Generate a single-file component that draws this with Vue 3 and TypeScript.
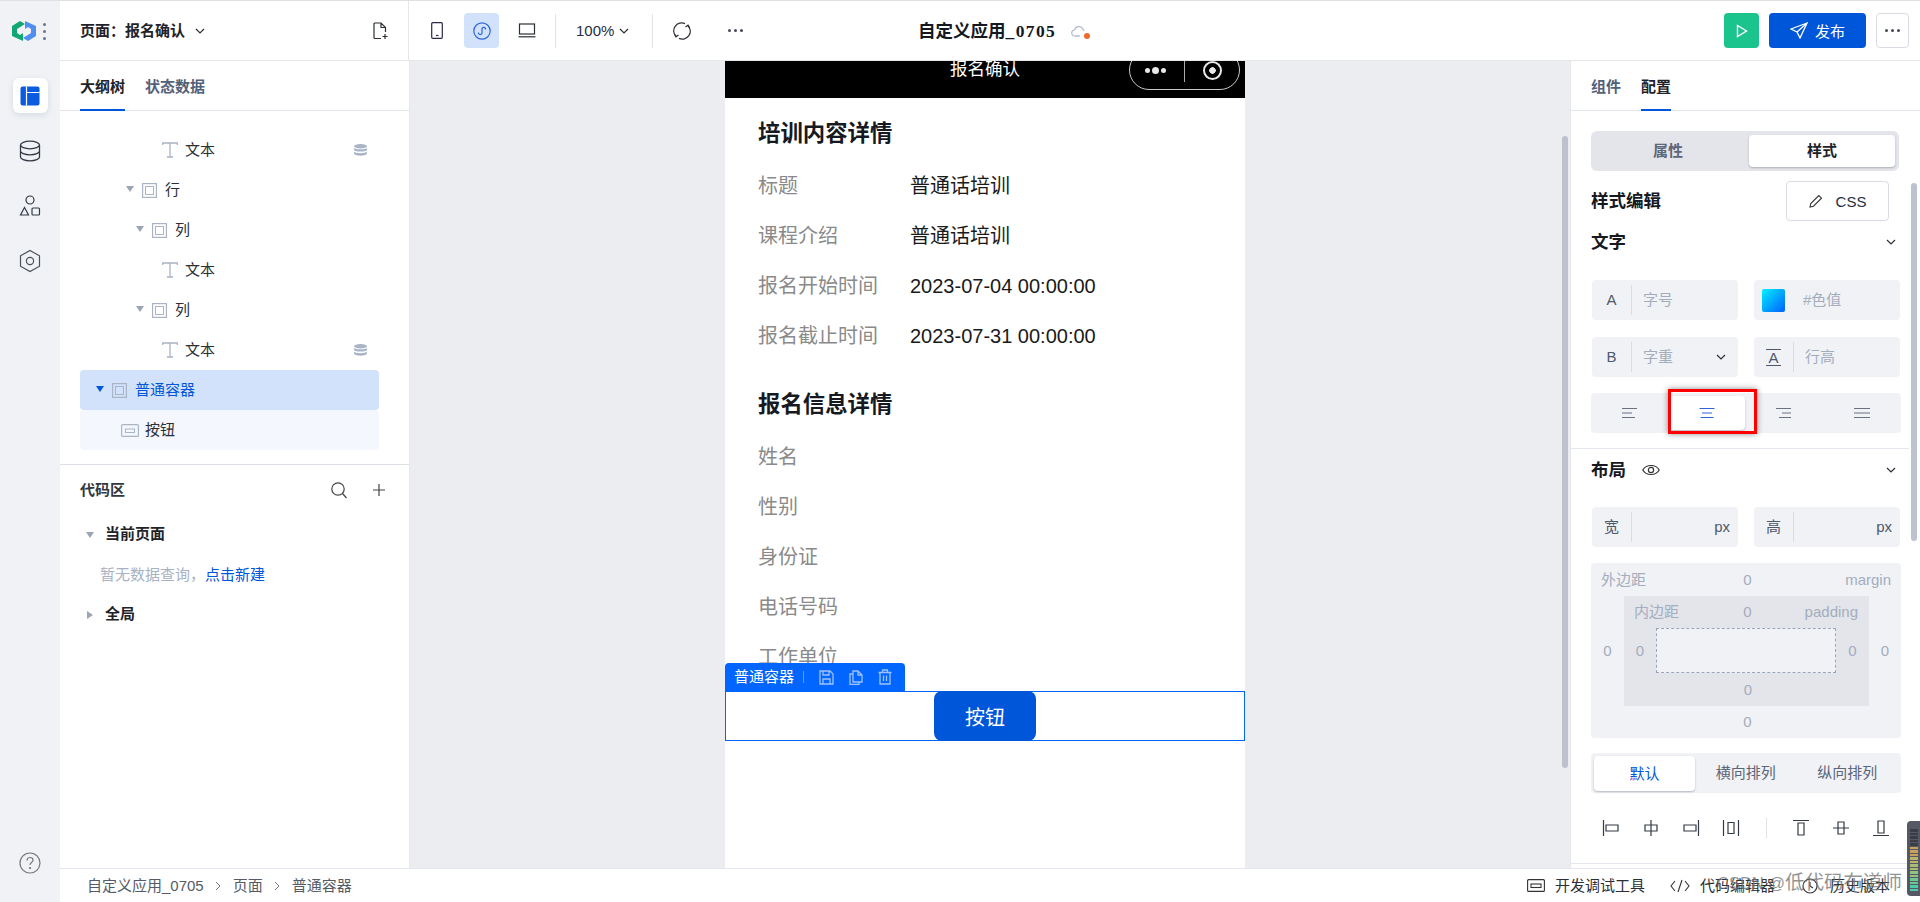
<template>
  <div class="app">
    <aside class="rail">
      <div class="logo">
        <svg width="24" height="20" viewBox="0 0 24 20">
          <path d="M0 5 L8 0 L13 3 L5 8 V12 L8 14 L11 12 V20 L0 15 Z" fill="#11a773" />
          <path d="M24 15 L16 20 L11 17 L19 12 V8 L16 6 L13 8 V0 L24 5 Z" fill="#4f8ff0" />
        </svg>
        <span class="logo-dots"><i></i><i></i><i></i></span>
      </div>
      <div class="rail-btn active">
        <svg width="20" height="20" viewBox="0 0 20 20">
          <rect x="0.5" y="0.5" width="19" height="19" rx="2" fill="#0a5be0" />
          <path d="M6.5 0.5 V19.5 M6.5 6.5 H19.5" stroke="#fff" stroke-width="1.2" />
        </svg>
      </div>
      <div class="rail-btn">
        <svg width="22" height="22" viewBox="0 0 22 22" fill="none" stroke="#333a45" stroke-width="1.3">
          <ellipse cx="11" cy="5" rx="9.5" ry="3.8" />
          <path d="M1.5 5 V17 C1.5 19 5.5 20.8 11 20.8 C16.5 20.8 20.5 19 20.5 17 V5 M1.5 11 C1.5 13 5.5 14.8 11 14.8 C16.5 14.8 20.5 13 20.5 11" />
        </svg>
      </div>
      <div class="rail-btn">
        <svg width="22" height="22" viewBox="0 0 22 22" fill="none" stroke="#333a45" stroke-width="1.2">
          <circle cx="11" cy="5" r="4" />
          <path d="M5.5 12.5 L9.5 20 H1.5 Z" />
          <rect x="13" y="13" width="7.5" height="7" rx="1" />
        </svg>
      </div>
      <div class="rail-btn">
        <svg width="22" height="24" viewBox="0 0 22 24" fill="none" stroke="#4a505a" stroke-width="1.2">
          <path d="M11 1.5 L20.5 6.8 V17.2 L11 22.5 L1.5 17.2 V6.8 Z" />
          <circle cx="11" cy="12" r="3.6" />
        </svg>
      </div>
      <div class="rail-help">
        <svg width="22" height="22" viewBox="0 0 22 22" fill="none" stroke="#777" stroke-width="1.2">
          <circle cx="11" cy="11" r="10" />
          <path d="M8 8.5 C8 6.5 9.5 5.5 11 5.5 C12.7 5.5 14 6.6 14 8.2 C14 10.4 11 10.6 11 13" />
          <circle cx="11" cy="16" r="0.5" fill="#777" />
        </svg>
      </div>
    </aside>

    <div class="main">
      <header class="topbar">
        <div class="page-pick">
          <span class="page-name">页面：报名确认</span>
          <svg class="chev" width="10" height="6" viewBox="0 0 10 6"><path d="M1 1 L5 5 L9 1" /></svg>
          <svg class="page-add" width="16" height="18" viewBox="0 0 16 18" fill="none" stroke="#2b2f36" stroke-width="1.2">
            <path d="M8 16.5 H2 A1 1 0 0 1 1 15.5 V2 A1 1 0 0 1 2 1 H8 L12.5 5.5 V10 M8 1 V5.5 H12.5" />
            <path d="M12 12 V17 M9.5 14.5 H14.5" />
          </svg>
        </div>
        <div class="tools">
          <div class="tool">
            <svg width="12" height="17" viewBox="0 0 12 17" fill="none" stroke="#2d2a48" stroke-width="1.2">
              <rect x="0.7" y="0.7" width="10.6" height="15.6" rx="1" />
              <path d="M5 13.5 H7.5" />
            </svg>
          </div>
          <div class="tool on">
            <svg width="18" height="18" viewBox="0 0 18 18" fill="none" stroke="#2f66d8" stroke-width="1.2">
              <circle cx="9" cy="9" r="8.2" />
              <path d="M5.5 10.5 V11.5 A2 2 0 0 0 9 11.5 V6.5 A2 2 0 0 1 12.5 6.5 V7.5" />
            </svg>
          </div>
          <div class="tool">
            <svg width="18" height="15" viewBox="0 0 18 15" fill="none" stroke="#2b2f36" stroke-width="1.2">
              <rect x="1.5" y="1" width="15" height="10" />
              <path d="M0.5 13.8 H17.5" />
            </svg>
          </div>
          <span class="tool-sep first"></span>
          <span class="zoom-val">100%</span>
          <svg class="chev" width="10" height="6" viewBox="0 0 10 6"><path d="M1 1 L5 5 L9 1" /></svg>
          <span class="tool-sep second"></span>
          <svg class="sync" width="18" height="18" viewBox="0 0 18 18" fill="none" stroke="#2b2f36" stroke-width="1.2">
            <path d="M3 14.5 A8 8 0 0 1 12 1.6 M15 3.5 A8 8 0 0 1 6 16.4" />
            <path d="M1.5 12 L3 14.8 L5.5 13 M16.5 6 L15 3.2 L12.5 5" />
          </svg>
          <span class="dots"><i></i><i></i><i></i></span>
        </div>
        <div class="app-title">
          <span class="app-name">自定义应用<span class="app-no">_0705</span></span>
          <span class="cloud">
            <svg width="16" height="12" viewBox="0 0 16 12" fill="none" stroke="#b4bccb" stroke-width="1.2">
              <path d="M8 11 H4 A3 3 0 0 1 3.5 5 A4.5 4.5 0 0 1 12 4.5 A3.5 3.5 0 0 1 13 6" />
              <path d="M4 11 H9" />
            </svg>
            <i class="cloud-dot"></i>
          </span>
        </div>
        <div class="actions">
          <button class="play">
            <svg width="12" height="14" viewBox="0 0 12 14" fill="none" stroke="#fff" stroke-width="1.4"><path d="M1.5 1.5 L10.5 7 L1.5 12.5 Z" /></svg>
          </button>
          <button class="publish">
            <svg width="18" height="17" viewBox="0 0 18 17" fill="none" stroke="#fff" stroke-width="1.3">
              <path d="M17 1 L1 7 L7 10 L10 16 Z M7 10 L17 1" />
            </svg>
            发布
          </button>
          <button class="more"><span class="dots"><i></i><i></i><i></i></span></button>
        </div>
      </header>

      <div class="body">
        <section class="left">
          <div class="tabs">
            <span class="tab active">大纲树</span>
            <span class="tab">状态数据</span>
          </div>
          <div class="tree">
            <div
              v-for="(row, i) in treeRows"
              :key="i"
              class="tree-row"
              :class="row.state"
              :style="{ paddingLeft: row.pad + 'px' }"
            >
              <i v-if="row.kind === 'box'" class="caret"></i>
              <svg v-if="row.kind === 'text'" class="t-ico" width="16" height="16" viewBox="0 0 16 16" fill="none" stroke="#a9b4c6" stroke-width="1.3">
                <path d="M0.7 3 V1 H15.3 V3 M8 1 V15 M5 15 H11" />
              </svg>
              <svg v-if="row.kind === 'box'" class="b-ico" width="15" height="15" viewBox="0 0 15 15" fill="none" stroke="#a9b4c6">
                <rect x="0.6" y="0.6" width="13.8" height="13.8" stroke-width="1.2" />
                <rect x="3.5" y="3.5" width="8" height="8" stroke-width="1" />
              </svg>
              <svg v-if="row.kind === 'btn'" class="btn-ico" width="18" height="13" viewBox="0 0 18 13" fill="none" stroke="#a9b4c6">
                <rect x="0.6" y="0.6" width="16.8" height="11.8" rx="1" stroke-width="1.2" />
                <rect x="4.5" y="5" width="9" height="3.5" stroke-width="1" />
              </svg>
              <span>{{ row.label }}</span>
              <svg v-if="row.bound" class="db-ico" width="13" height="12" viewBox="0 0 13 12" fill="#a9b4c6">
                <ellipse cx="6.5" cy="2.2" rx="6.5" ry="2.2" />
                <path d="M0 4 C1 5.8 12 5.8 13 4 V6 C12 8 1 8 0 6 Z M0 7.8 C1 9.6 12 9.6 13 7.8 V9.6 C12 12.5 1 12.5 0 9.6 Z" />
              </svg>
            </div>
          </div>
          <div class="code">
            <div class="code-head">
              <span class="code-title">代码区</span>
              <svg class="search" width="16" height="17" viewBox="0 0 16 17" fill="none" stroke="#444" stroke-width="1.2">
                <circle cx="7" cy="7" r="6.2" />
                <path d="M11.5 11.5 L15.5 16" />
              </svg>
              <svg class="plus" width="12" height="12" viewBox="0 0 12 12" stroke="#444" stroke-width="1.2"><path d="M6 0 V12 M0 6 H12" /></svg>
            </div>
            <div class="code-row"><i class="caret small"></i>当前页面</div>
            <div class="code-empty">暂无数据查询，<span>点击新建</span></div>
            <div class="code-row"><i class="caret small side"></i>全局</div>
          </div>
        </section>

        <section class="canvas">
          <div class="phone">
            <div class="nav">
              <span class="nav-title">报名确认</span>
              <div class="capsule">
                <span class="cap-dots"><i></i><b></b><i></i></span>
                <span class="cap-sep"></span>
                <span class="cap-ring"></span>
              </div>
            </div>
            <h3 class="sec-title first">培训内容详情</h3>
            <div v-for="item in courseRows" :key="item.label" class="info-row">
              <span class="info-label">{{ item.label }}</span>
              <span class="info-value">{{ item.value }}</span>
            </div>
            <h3 class="sec-title second">报名信息详情</h3>
            <div v-for="label in formRows" :key="label" class="info-row">
              <span class="info-label">{{ label }}</span>
            </div>
            <div class="selected">
              <div class="sel-bar">
                <span>普通容器</span>
                <i class="sel-sep"></i>
                <svg width="15" height="15" viewBox="0 0 15 15" fill="none" stroke="#9ec2ff" stroke-width="1.3">
                  <path d="M1 1 H11 L14 4 V14 H1 Z M4 1 V5 H10 V1 M4 14 V9 H11 V14" />
                </svg>
                <svg width="14" height="15" viewBox="0 0 14 15" fill="none" stroke="#9ec2ff" stroke-width="1.3">
                  <path d="M4 1 H9 L13 5 V12 H4 Z M9 1 V5 H13 M4 4 H1 V14.3 H10 V12" />
                </svg>
                <svg width="14" height="16" viewBox="0 0 14 16" fill="none" stroke="#9ec2ff" stroke-width="1.3">
                  <path d="M0.5 3.5 H13.5 M4.5 3.5 V1 H9.5 V3.5 M2 3.5 V15 H12 V3.5 M5.5 6.5 V12 M8.5 6.5 V12" />
                </svg>
              </div>
              <button class="demo-btn">按钮</button>
            </div>
          </div>
          <i class="canvas-scroll"></i>
        </section>

        <section class="right">
          <div class="tabs">
            <span class="tab">组件</span>
            <span class="tab active">配置</span>
          </div>
          <div class="config">
            <div class="seg top-seg">
              <span>属性</span>
              <span class="picked dark">样式</span>
            </div>
            <div class="style-head">
              <span class="h-big">样式编辑</span>
              <button class="css-btn">
                <svg width="14" height="14" viewBox="0 0 14 14" fill="none" stroke="#333" stroke-width="1.1">
                  <path d="M1 13 L1.8 9.5 L9.8 1.5 L12.5 4.2 L4.5 12.2 Z" />
                </svg>
                CSS
              </button>
            </div>
            <div class="sec-head">
              <span class="h-big">文字</span>
              <svg class="chev" width="10" height="6" viewBox="0 0 10 6"><path d="M1 1 L5 5 L9 1" /></svg>
            </div>
            <div class="fields text-fields">
              <div class="field"><span class="f-key">A</span><span class="f-ph">字号</span></div>
              <div class="field color"><i class="swatch"></i><span class="f-ph">#色值</span></div>
              <div class="field">
                <span class="f-key">B</span><span class="f-ph">字重</span>
                <svg class="chev f-chev" width="10" height="6" viewBox="0 0 10 6"><path d="M1 1 L5 5 L9 1" /></svg>
              </div>
              <div class="field">
                <span class="f-key line"><u>A</u></span><span class="f-ph">行高</span>
              </div>
            </div>
            <div class="align-row">
              <span class="align-cell">
                <svg width="16" height="10" viewBox="0 0 16 10" stroke="#6a7180"><path d="M0 0.5 H15 M0 5 H10 M0 9.5 H13" /></svg>
              </span>
              <span class="align-cell picked">
                <svg width="16" height="10" viewBox="0 0 16 10" stroke="#2f66d8"><path d="M0.5 0.5 H15.5 M3 5 H13 M1.5 9.5 H14.5" /></svg>
              </span>
              <span class="align-cell">
                <svg width="16" height="10" viewBox="0 0 16 10" stroke="#6a7180"><path d="M0 0.5 H15 M6 5 H15 M3 9.5 H15" /></svg>
              </span>
              <span class="align-cell">
                <svg width="16" height="10" viewBox="0 0 16 10" stroke="#6a7180"><path d="M0 0.5 H16 M0 5 H16 M0 9.5 H16" /></svg>
              </span>
              <i class="red-mark"></i>
            </div>
            <div class="split"></div>
            <div class="sec-head layout-head">
              <span class="h-big">布局</span>
              <svg class="eye" width="18" height="12" viewBox="0 0 18 12" fill="none" stroke="#333" stroke-width="1.2">
                <path d="M0.8 6 C4 0 14 0 17.2 6 C14 12 4 12 0.8 6 Z" />
                <circle cx="9" cy="6" r="2.6" />
              </svg>
              <svg class="chev" width="10" height="6" viewBox="0 0 10 6"><path d="M1 1 L5 5 L9 1" /></svg>
            </div>
            <div class="fields size-fields">
              <div class="field"><span class="f-key">宽</span><span class="f-unit">px</span></div>
              <div class="field"><span class="f-key">高</span><span class="f-unit">px</span></div>
            </div>
            <div class="box-model">
              <div class="bm-row"><span>外边距</span><span class="bm-c">0</span><span class="bm-r">margin</span></div>
              <span class="bm-side">0</span>
              <div class="bm-inner">
                <div class="bm-row in"><span>内边距</span><span class="bm-c">0</span><span class="bm-r">padding</span></div>
                <span class="bm-side">0</span>
                <div class="bm-core"></div>
                <span class="bm-side">0</span>
                <span class="bm-foot">0</span>
              </div>
              <span class="bm-side">0</span>
              <span class="bm-foot">0</span>
            </div>
            <div class="seg layout-seg">
              <span class="picked blue">默认</span>
              <span>横向排列</span>
              <span>纵向排列</span>
            </div>
            <div class="dist-row">
              <span v-for="d in distLeft" :key="d" class="dist">
                <svg width="18" height="18" viewBox="0 0 18 18" fill="none" stroke="#333a45" stroke-width="1.2"><path :d="d" /></svg>
              </span>
              <i class="dist-sep"></i>
              <span v-for="d in distRight" :key="d" class="dist">
                <svg width="18" height="18" viewBox="0 0 18 18" fill="none" stroke="#333a45" stroke-width="1.2"><path :d="d" /></svg>
              </span>
            </div>
            <div class="split low"></div>
          </div>
          <i class="right-scroll"></i>
        </section>
      </div>

      <footer class="status">
        <span>自定义应用_0705</span>
        <svg class="crumb" width="6" height="10" viewBox="0 0 6 10"><path d="M1 1 L5 5 L1 9" /></svg>
        <span>页面</span>
        <svg class="crumb" width="6" height="10" viewBox="0 0 6 10"><path d="M1 1 L5 5 L1 9" /></svg>
        <span>普通容器</span>
        <div class="status-right">
          <svg width="18" height="13" viewBox="0 0 18 13" fill="none" stroke="#333" stroke-width="1.1">
            <rect x="0.6" y="0.6" width="16.8" height="11.8" rx="1" />
            <rect x="4" y="5" width="10" height="3.5" />
          </svg>
          <span class="st-text">开发调试工具</span>
          <svg class="code-ico" width="20" height="14" viewBox="0 0 20 14" fill="none" stroke="#333" stroke-width="1.1">
            <path d="M5 2 L1 7 L5 12 M15 2 L19 7 L15 12 M12 1 L8 13" />
          </svg>
          <span class="st-text">代码编辑器</span>
          <svg class="clock-ico" width="16" height="16" viewBox="0 0 16 16" fill="none" stroke="#333" stroke-width="1.1">
            <circle cx="8" cy="8" r="7" />
            <path d="M8 4 V8 L11 10" />
          </svg>
          <span class="st-text">历史版本</span>
        </div>
      </footer>
    </div>

    <span class="watermark"><span class="wm-latin">CSDN @</span>低代码布道师</span>
    <div class="meter">
      <i v-for="(c, i) in meterBars" :key="i" :style="{ background: c }"></i>
    </div>
  </div>
</template>

<script setup lang="ts">
interface TreeRow {
  label: string
  kind: 'text' | 'box' | 'btn'
  pad: number
  bound?: boolean
  state?: string
}

const treeRows: TreeRow[] = [
  { label: '文本', kind: 'text', pad: 82, bound: true },
  { label: '行', kind: 'box', pad: 46 },
  { label: '列', kind: 'box', pad: 56 },
  { label: '文本', kind: 'text', pad: 82 },
  { label: '列', kind: 'box', pad: 56 },
  { label: '文本', kind: 'text', pad: 82, bound: true },
  { label: '普通容器', kind: 'box', pad: 16, state: 'sel' },
  { label: '按钮', kind: 'btn', pad: 41, state: 'child' },
]

const courseRows = [
  { label: '标题', value: '普通话培训' },
  { label: '课程介绍', value: '普通话培训' },
  { label: '报名开始时间', value: '2023-07-04 00:00:00' },
  { label: '报名截止时间', value: '2023-07-31 00:00:00' },
]

const formRows = ['姓名', '性别', '身份证', '电话号码', '工作单位']

const distLeft = [
  'M1.5 1 V17 M4 6 H16 V12 H4 Z',
  'M9 1 V17 M3 6 H15 V12 H3 Z',
  'M16.5 1 V17 M2 6 H14 V12 H2 Z',
  'M1.5 1 V17 M16.5 1 V17 M6 3.5 H12 V14.5 H6 Z',
]
const distRight = [
  'M1 1.5 H17 M6 4 H12 V16 H6 Z',
  'M1 9 H17 M6 3 H12 V15 H6 Z',
  'M1 16.5 H17 M6 2 H12 V14 H6 Z',
]

const meterBars = [
  '#3a3d45', '#3a3d45', '#3a3d45', '#3a3d45', '#3a3d45', '#c9a15a', '#c9a15a', '#c9a15a',
  '#bcb36a', '#bcb36a', '#a9bd72', '#a9bd72', '#8fc47f', '#8fc47f', '#6cc893', '#6cc893', '#4fcaa5', '#4fcaa5',
]
</script>

<style>
html,
body {
  margin: 0;
  height: 100%;
  overflow: hidden;
}
</style>

<style scoped>
.app {
  position: relative;
  display: flex;
  height: 901px;
  border-top: 1px solid #e0e0e0;
  overflow: hidden;
  font-family: "Liberation Sans", "Noto Sans CJK SC", sans-serif;
  font-size: 15px;
  line-height: 1.2;
  color: #1f2329;
  background: #fff;
}

i {
  display: block;
  font-style: normal;
}

button {
  font-family: inherit;
  border: none;
  padding: 0;
}

.chev {
  fill: none;
  stroke: #2b2f36;
  stroke-width: 1.2;
  flex: none;
}

/* rail */
.rail {
  width: 60px;
  flex: none;
  background: #f0f2f6;
  display: flex;
  flex-direction: column;
  align-items: center;
}

.logo {
  height: 60px;
  width: 60px;
  display: flex;
  align-items: center;
  padding-left: 12px;
  box-sizing: border-box;
  gap: 7px;
}

.logo-dots {
  display: flex;
  flex-direction: column;
  gap: 4px;
}

.logo-dots i {
  width: 3px;
  height: 3px;
  border-radius: 50%;
  background: #6b7280;
}

.rail-btn {
  width: 35px;
  height: 35px;
  margin-top: 20px;
  display: flex;
  align-items: center;
  justify-content: center;
}

.rail-btn.active {
  margin-top: 17px;
  background: #fff;
  border-radius: 6px;
  box-shadow: 0 2px 6px rgba(30, 50, 90, 0.12);
}

.rail-help {
  margin-top: auto;
  margin-bottom: 28px;
  height: 22px;
}

/* main */
.main {
  flex: 1;
  min-width: 0;
  display: flex;
  flex-direction: column;
}

.topbar {
  position: relative;
  height: 59px;
  flex: none;
  display: flex;
  align-items: center;
  border-bottom: 1px solid #e5e7eb;
}

.page-pick {
  width: 349px;
  height: 100%;
  flex: none;
  display: flex;
  align-items: center;
  padding: 0 19px 0 20px;
  box-sizing: border-box;
  border-right: 1px solid #e5e7eb;
}

.page-name {
  font-weight: 700;
  margin-right: 10px;
}

.page-add {
  margin-left: auto;
}

.tools {
  display: flex;
  align-items: center;
  padding-left: 10px;
}

.tool {
  width: 35px;
  height: 35px;
  margin-right: 10px;
  border-radius: 4px;
  display: flex;
  align-items: center;
  justify-content: center;
}

.tool.on {
  background: #d2e2fb;
}

.tool-sep {
  width: 1px;
  height: 34px;
  background: #e2e4e8;
}

.tool-sep.first {
  margin: 0 20px 0 1px;
}

.tool-sep.second {
  margin: 0 20px 0 23px;
}

.zoom-val {
  margin-right: 5px;
  color: #25303f;
}

.sync {
  flex: none;
}

.dots {
  display: flex;
  gap: 3px;
}

.dots i {
  width: 3px;
  height: 3px;
  border-radius: 50%;
  background: #444b57;
}

.tools > .dots {
  margin-left: 37px;
}

.app-title {
  position: absolute;
  left: 858px;
  top: 0;
  height: 100%;
  display: flex;
  align-items: center;
}

.app-name {
  font-size: 17.5px;
  font-weight: 700;
  font-family: "Noto Sans CJK SC", sans-serif;
  color: #14181f;
}

.app-no {
  font-family: "Liberation Serif", serif;
  letter-spacing: 1.4px;
}

.cloud {
  position: relative;
  display: block;
  height: 12px;
  margin-left: 15px;
}

.cloud svg {
  display: block;
}

.cloud-dot {
  position: absolute;
  right: -3px;
  bottom: -2px;
  width: 6px;
  height: 6px;
  border-radius: 50%;
  background: #ee6b2f;
}

.actions {
  margin-left: auto;
  display: flex;
  align-items: center;
  gap: 10px;
  padding-right: 11px;
}

.actions button {
  height: 35px;
  border-radius: 4px;
  display: flex;
  align-items: center;
  justify-content: center;
}

.play {
  width: 35px;
  background: #1cc48d;
}

.publish {
  width: 97px;
  background: #0056d9;
  color: #fff;
  font-size: 15px;
  gap: 7px;
}

.actions .more {
  width: 33px;
  background: #fff;
  border: 1px solid #d9dce4;
  box-sizing: border-box;
}

/* body */
.body {
  flex: 1;
  min-height: 0;
  display: flex;
}

.left {
  width: 350px;
  flex: none;
  box-sizing: border-box;
  border-right: 1px solid #e5e7eb;
  background: #fff;
}

.tabs {
  height: 50px;
  box-sizing: border-box;
  border-bottom: 1px solid #e3e6ec;
  padding-left: 20px;
  display: flex;
  gap: 20px;
}

.tab {
  height: 50px;
  line-height: 52px;
  box-sizing: border-box;
  font-weight: 700;
  color: #52617a;
}

.tab.active {
  color: #1f2329;
  border-bottom: 2px solid #0056d9;
}

.tree {
  height: 354px;
  padding: 19px 30px 0 20px;
  box-sizing: border-box;
  border-bottom: 1px solid #dcdfe6;
}

.tree-row {
  position: relative;
  height: 40px;
  display: flex;
  align-items: center;
  color: #2b2f36;
}

.tree-row.sel {
  background: #d2e2fb;
  color: #0056d9;
  border-radius: 4px;
}

.tree-row.child {
  background: #f4f7fe;
  border-radius: 4px;
}

.caret {
  width: 0;
  height: 0;
  border-left: 4px solid transparent;
  border-right: 4px solid transparent;
  border-top: 6px solid #9aa5b8;
  margin-right: 8px;
  margin-top: -2px;
  flex: none;
}

.sel .caret {
  border-top-color: #0056d9;
}

.b-ico {
  margin-right: 8px;
  flex: none;
}

.t-ico {
  margin-right: 7px;
  flex: none;
}

.btn-ico {
  margin-right: 6px;
  flex: none;
}

.db-ico {
  position: absolute;
  left: 274px;
  top: 14px;
}

.code-head {
  height: 50px;
  display: flex;
  align-items: center;
  padding-left: 20px;
}

.code-title {
  font-weight: 700;
  color: #333840;
}

.search {
  margin-left: auto;
}

.plus {
  margin: 0 24px 0 26px;
}

.code-row {
  height: 40px;
  display: flex;
  align-items: center;
  padding-left: 26px;
  font-weight: 700;
  margin-top: -1px;
  margin-bottom: 1px;
  color: #1f2329;
}

.caret.small {
  margin-right: 11px;
  margin-top: 2px;
}

.caret.side {
  border-top: 4px solid transparent;
  border-bottom: 4px solid transparent;
  border-left: 6px solid #9aa5b8;
  border-right: none;
  margin-left: 1px;
  margin-right: 12px;
}

.code-empty {
  height: 40px;
  line-height: 40px;
  padding-left: 40px;
  color: #a8b2c2;
}

.code-empty span {
  color: #0056d9;
}

/* canvas */
.canvas {
  position: relative;
  flex: 1;
  min-width: 0;
  background: #ebedf1;
  display: flex;
  justify-content: center;
  padding-right: 10px;
}

.phone {
  width: 520px;
  background: #fff;
  font-size: 20px;
  overflow: hidden;
}

.nav {
  position: relative;
  height: 37px;
  background: #000;
  overflow: hidden;
  display: flex;
  justify-content: center;
}

.nav-title {
  color: #fff;
  font-size: 17.5px;
  line-height: 20px;
  margin-top: -2px;
}

.capsule {
  position: absolute;
  right: 5px;
  bottom: 8px;
  width: 111px;
  height: 40px;
  box-sizing: border-box;
  border: 1px solid #c9c9c9;
  border-radius: 20px;
  display: flex;
  align-items: center;
}

.cap-dots {
  display: flex;
  align-items: center;
  gap: 2px;
  margin-left: 15px;
}

.cap-dots i {
  width: 5px;
  height: 5px;
  border-radius: 50%;
  background: #e8e8e8;
}

.cap-dots b {
  width: 7px;
  height: 7px;
  border-radius: 50%;
  background: #e8e8e8;
}

.cap-sep {
  width: 1px;
  height: 24px;
  background: #aaa;
  margin-left: 18px;
}

.cap-ring {
  width: 19px;
  height: 19px;
  margin-left: 18px;
  box-sizing: border-box;
  border-radius: 50%;
  border: 2px solid #e8e8e8;
  background: radial-gradient(circle, #e8e8e8 0 3px, #000 3.5px);
}

.sec-title {
  margin: 0;
  padding-left: 33px;
  height: 36px;
  line-height: 36px;
  font-size: 22.4px;
  font-weight: 700;
  color: #16191f;
}

.sec-title.first {
  margin-top: 18px;
  margin-bottom: 9px;
}

.sec-title.second {
  margin-top: 26px;
  margin-bottom: 9px;
}

.info-row {
  height: 50px;
  padding-left: 33px;
  display: flex;
  align-items: center;
}

.info-label {
  width: 152px;
  flex: none;
  color: #8a8a8a;
}

.info-value {
  color: #1a1a1a;
}

.selected {
  position: relative;
  height: 50px;
  margin-top: 9px;
  box-sizing: border-box;
  border: 1px solid #0066ff;
  display: flex;
  justify-content: center;
}

.sel-bar {
  position: absolute;
  left: -1px;
  bottom: 100%;
  width: 180px;
  height: 28px;
  margin-bottom: 1px;
  background: #0066ff;
  border-radius: 4px 4px 0 0;
  color: #fff;
  font-size: 15px;
  display: flex;
  align-items: center;
  padding-left: 9px;
  box-sizing: border-box;
  gap: 15px;
}

.sel-sep {
  width: 1px;
  height: 12px;
  background: #5a9bff;
  margin: 0 0 0 -6px;
}

.demo-btn {
  width: 102px;
  height: 50px;
  margin-top: -1px;
  background: #0056d9;
  color: #fff;
  font-size: 20px;
  border-radius: 8px;
}

.canvas-scroll {
  position: absolute;
  right: 2px;
  top: 75px;
  width: 6px;
  height: 632px;
  border-radius: 3px;
  background: #bcc3cf;
}

/* right */
.right {
  position: relative;
  width: 350px;
  flex: none;
  box-sizing: border-box;
  border-left: 1px solid #e5e7eb;
  background: #fff;
}

.config {
  padding: 20px 19px 0 20px;
}

.seg {
  display: flex;
  background: #e3e5ea;
  border-radius: 6px;
  color: #5c6678;
}

.seg span {
  display: flex;
  align-items: center;
  justify-content: center;
  flex: 1;
}

.seg .picked {
  background: #fff;
  border-radius: 4px;
  box-shadow: 0 1px 2px rgba(40, 50, 70, 0.3);
}

.top-seg {
  width: 308px;
  height: 40px;
  padding: 4px;
  box-sizing: border-box;
  font-weight: 700;
}

.top-seg span:first-child {
  width: 146px;
  flex: none;
}

.top-seg .picked {
  width: 146px;
  flex: none;
  margin-left: auto;
}

.dark {
  color: #1f2329;
}

.blue {
  color: #0056d9;
}

.style-head {
  height: 40px;
  margin-top: 10px;
  display: flex;
  align-items: center;
}

.h-big {
  font-size: 17.5px;
  font-weight: 700;
  color: #16191f;
}

.css-btn {
  width: 103px;
  height: 40px;
  margin-left: auto;
  margin-right: 12px;
  background: #fff;
  border: 1px solid #d9dce4;
  border-radius: 4px;
  box-sizing: border-box;
  font-size: 15px;
  color: #25303f;
  display: flex;
  align-items: center;
  justify-content: center;
  gap: 13px;
}

.sec-head {
  height: 40px;
  margin-top: 1px;
  display: flex;
  align-items: center;
}

.sec-head > .chev {
  margin-left: auto;
  margin-right: 5px;
}

.fields {
  display: grid;
  grid-template-columns: 146px 146px;
  column-gap: 16px;
  row-gap: 17px;
  padding-left: 1px;
}

.text-fields {
  margin-top: 18px;
}

.field {
  position: relative;
  height: 40px;
  background: #f0f2f6;
  border-radius: 4px;
  display: flex;
  align-items: center;
}

.f-key {
  width: 39px;
  height: 30px;
  flex: none;
  border-right: 1px solid #d9dce4;
  display: flex;
  align-items: center;
  justify-content: center;
  color: #4e596b;
  margin-right: 11px;
}

.f-key u {
  text-decoration: none;
  border-top: 1px solid #4e596b;
  border-bottom: 1px solid #4e596b;
  line-height: 15px;
  padding: 0 2px;
}

.f-ph {
  color: #a3adbd;
}

.field.color {
  padding-left: 8px;
  gap: 18px;
}

.swatch {
  width: 23px;
  height: 23px;
  border-radius: 2px;
  background: linear-gradient(135deg, #00f0ff, #0060ff);
}

.f-chev {
  position: absolute;
  right: 12px;
  top: 17px;
}

.f-unit {
  margin-left: auto;
  margin-right: 8px;
  color: #4e596b;
}

.align-row {
  position: relative;
  width: 310px;
  height: 40px;
  margin-top: 16px;
  background: #f0f2f6;
  border-radius: 4px;
  display: flex;
}

.align-cell {
  flex: 1;
  display: flex;
  align-items: center;
  justify-content: center;
}

.align-cell.picked {
  background: #fff;
  flex: none;
  width: 76px;
  margin: 3px 0;
  border-radius: 4px;
  box-shadow: 0 1px 2px rgba(40, 50, 70, 0.3);
}

.red-mark {
  position: absolute;
  left: 77px;
  top: -4px;
  width: 89px;
  height: 45px;
  box-sizing: border-box;
  border: 3px solid #f00;
  box-shadow: 0 0 6px rgba(0, 0, 0, 0.45);
}

.split {
  height: 1px;
  width: 338px;
  margin-left: -20px;
  margin-top: 15px;
  background: #e3e6ec;
}

.layout-head {
  margin-top: 1px;
}

.eye {
  margin-left: 16px;
}

.size-fields {
  margin-top: 17px;
}

.box-model {
  margin-top: 16px;
  width: 310px;
  height: 175px;
  background: #f0f2f6;
  border-radius: 4px;
  display: grid;
  grid-template-columns: 33px 245px 32px;
  grid-template-rows: 33px 110px 32px;
  color: #a3adbd;
}

.bm-row {
  grid-column: 1 / -1;
  display: grid;
  grid-template-columns: 1fr auto 1fr;
  align-items: center;
  padding: 0 10px;
}

.bm-row.in {
  padding: 0 11px 0 10px;
}

.bm-r {
  text-align: right;
}

.bm-c {
  padding-left: 3px;
}

.bm-side {
  display: flex;
  align-items: center;
  justify-content: center;
}

.bm-foot {
  grid-column: 1 / -1;
  display: flex;
  align-items: center;
  justify-content: center;
  padding-left: 3px;
}

.bm-inner {
  background: #e3e5ea;
  display: grid;
  grid-template-columns: 32px 180px 33px;
  grid-template-rows: 32px 45px 33px;
}

.bm-core {
  border: 1px dashed #9aa5b8;
  background: #f0f2f6;
  box-sizing: border-box;
}

.layout-seg {
  margin-top: 15px;
  width: 310px;
  height: 40px;
  padding: 3px;
  box-sizing: border-box;
  background: #f0f2f6;
  border-radius: 4px;
}

.layout-seg .picked {
  flex: none;
  width: 101px;
  height: 35px;
  color: #0056d9;
}

.dist-row {
  margin-top: 15px;
  height: 40px;
  display: flex;
  align-items: center;
}

.dist {
  width: 40px;
  display: flex;
  justify-content: center;
}

.dist-sep {
  width: 1px;
  height: 20px;
  background: #e0e3e8;
  margin: 0 14px 0 16px;
}

.split.low {
  margin-top: 15px;
}

.right-scroll {
  position: absolute;
  left: 340px;
  top: 122px;
  width: 6px;
  height: 358px;
  border-radius: 3px;
  background: #bcc3cf;
}

/* status */
.status {
  height: 33px;
  flex: none;
  border-top: 1px solid #e3e6ec;
  display: flex;
  align-items: center;
  padding-left: 27px;
  color: #555b66;
  background: #fff;
}

.crumb {
  fill: none;
  stroke: #777;
  margin: 0 11.5px;
}

.status-right {
  margin-left: auto;
  display: flex;
  align-items: center;
  padding-right: 30px;
  color: #2b2f36;
}

.st-text {
  margin-left: 10px;
}

.code-ico {
  margin-left: 25px;
}

.clock-ico {
  margin-left: 27px;
}

.clock-ico + .st-text {
  margin-left: 12px;
}

.watermark {
  position: absolute;
  left: 1717px;
  top: 870px;
  font-size: 19.5px;
  color: rgba(110, 110, 110, 0.75);
  white-space: nowrap;
}

.wm-latin {
  font-size: 16.5px;
}

.meter {
  position: absolute;
  right: 0;
  top: 820px;
  width: 13px;
  height: 75px;
  box-sizing: border-box;
  padding: 8px 2px 0 3px;
  background: #555965;
  border-radius: 4px 0 0 4px;
  display: flex;
  flex-direction: column;
  gap: 1px;
}

.meter i {
  height: 2.5px;
  flex: none;
}
</style>
